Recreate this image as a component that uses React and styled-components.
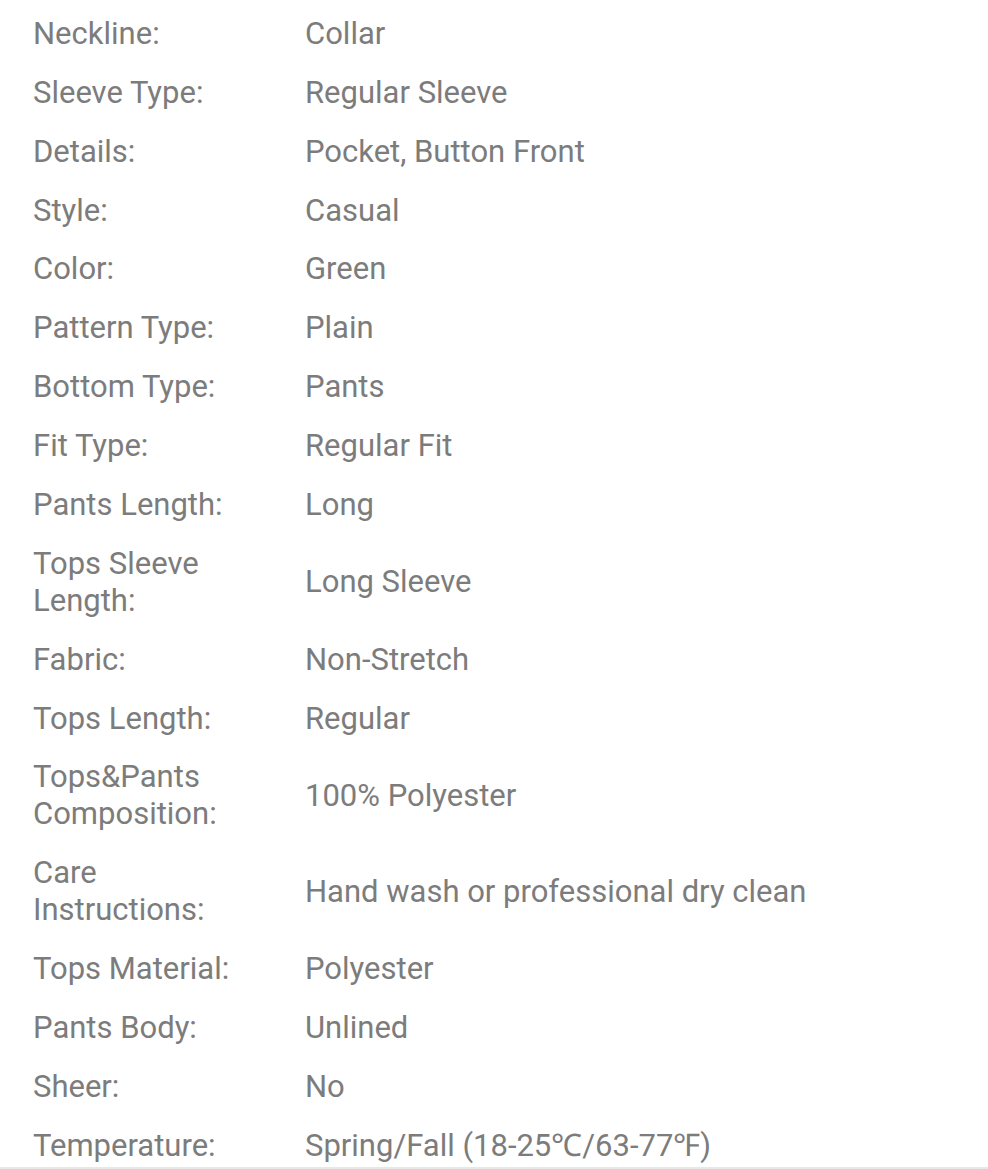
import React from "react";
import styled, { createGlobalStyle } from "styled-components";

const GlobalStyle = createGlobalStyle`
  html, body {
    margin: 0;
    padding: 0;
    background: #ffffff;
  }
  body {
    font-family: Roboto, "Liberation Sans", Arial, sans-serif;
    -webkit-font-smoothing: antialiased;
  }
`;

const Table = styled.div`
  padding: 4px 0 0 33px;
  border-bottom: 2px solid #e8e8e8;
  width: 988px;
  box-sizing: border-box;
`;

const Row = styled.div`
  display: grid;
  grid-template-columns: 272px 1fr;
  align-items: center;
  padding: 10.95px 0;
  font-size: 31px;
  line-height: 37px;
  color: #7c7c7c;

  &:last-child {
    padding-bottom: 3px;
  }
`;

const Label = styled.div`
  padding-right: 50px;
`;

const Value = styled.div``;

const specs = [
  ["Neckline:", "Collar"],
  ["Sleeve Type:", "Regular Sleeve"],
  ["Details:", "Pocket, Button Front"],
  ["Style:", "Casual"],
  ["Color:", "Green"],
  ["Pattern Type:", "Plain"],
  ["Bottom Type:", "Pants"],
  ["Fit Type:", "Regular Fit"],
  ["Pants Length:", "Long"],
  ["Tops Sleeve Length:", "Long Sleeve"],
  ["Fabric:", "Non-Stretch"],
  ["Tops Length:", "Regular"],
  ["Tops&Pants Composition:", "100% Polyester"],
  ["Care Instructions:", "Hand wash or professional dry clean"],
  ["Tops Material:", "Polyester"],
  ["Pants Body:", "Unlined"],
  ["Sheer:", "No"],
  ["Temperature:", "Spring/Fall (18-25℃/63-77℉)"],
];

const App = () => {
  return (
    <>
      <GlobalStyle />
      <Table>
        {specs.map(([label, value]) => (
          <Row key={label}>
            <Label>{label}</Label>
            <Value>{value}</Value>
          </Row>
        ))}
      </Table>
    </>
  );
};

export default App;
